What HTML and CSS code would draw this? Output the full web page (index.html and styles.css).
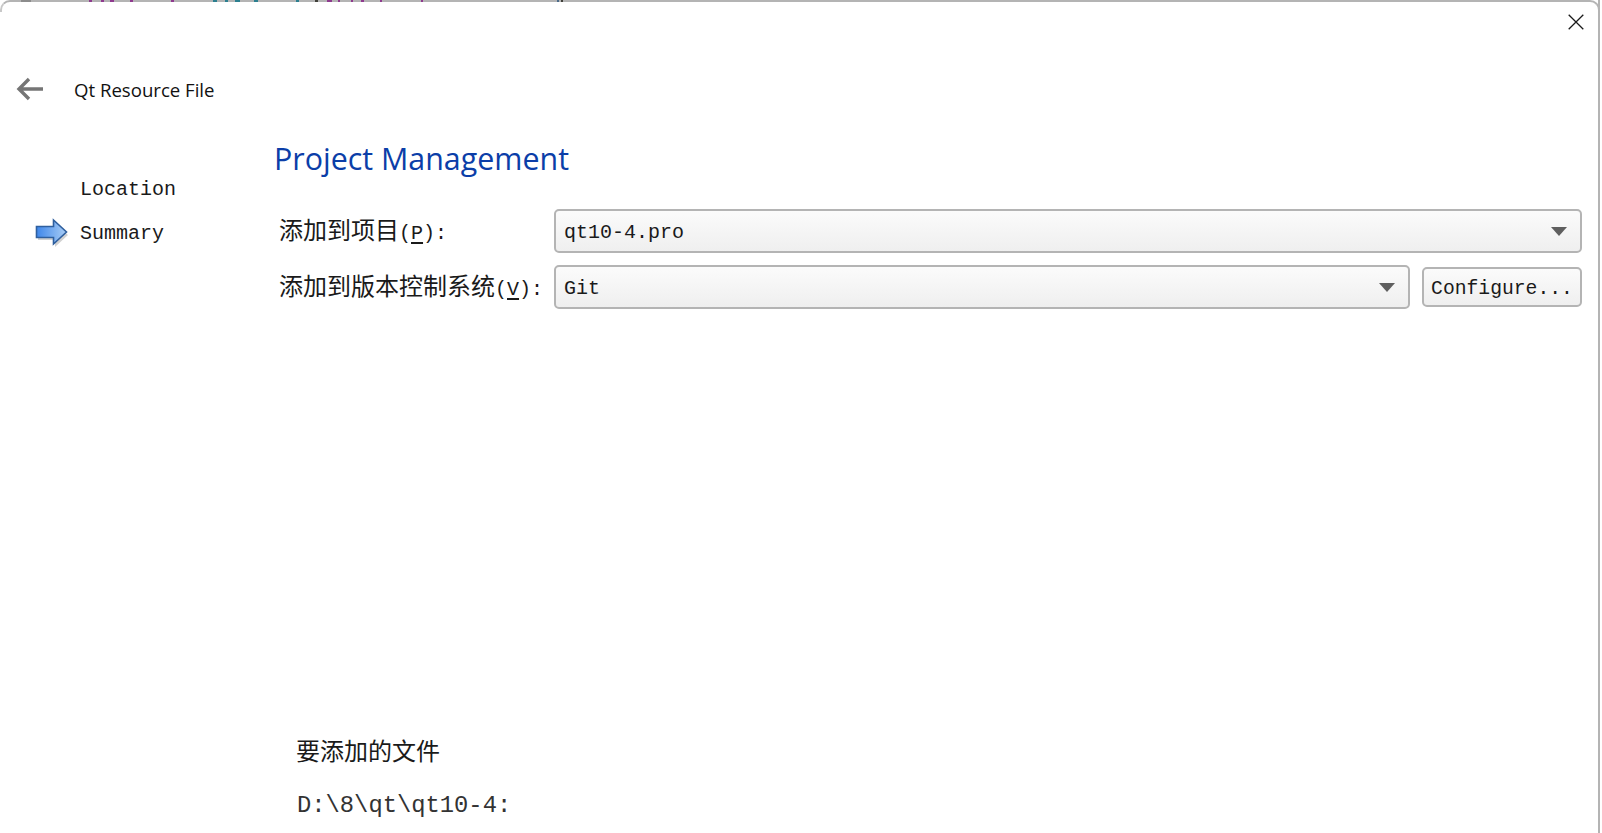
FILE: index.html
```html
<!DOCTYPE html>
<html lang="en">
<head>
    <meta charset="UTF-8">
    <meta name="viewport" content="width=device-width, initial-scale=1.0">
    <title>Project Management</title>
    <link rel="stylesheet" href="styles.css">
</head>
<body>
    <section class="window">
        <div class="titlebar">
            <button class="close" aria-label="Close">
                <svg width="16" height="16" viewBox="0 0 16 16"><path d="M.7.7 15.3 15.3M15.3.7.7 15.3" stroke="#1a1a1a" stroke-width="1.3" fill="none"/></svg>
            </button>
        </div>
        <header class="wizard-head">
            <svg class="back" width="27" height="24" viewBox="0 0 27 24"><path d="M13 2 3 12l10 10M3 12h24" stroke="#757575" stroke-width="3.4" fill="none"/></svg>
            <span class="wizard-name">Qt Resource File</span>
        </header>
        <div class="wizard-body">
            <nav class="steps">
                <div class="step">Location</div>
                <div class="step current">
                    <svg class="step-arrow" width="36" height="32" viewBox="0 0 36 32">
                        <defs>
                            <linearGradient id="arrowFill" x1="0" y1="0" x2="1" y2="0">
                                <stop offset="0" stop-color="#3f87ea"/>
                                <stop offset="1" stop-color="#a9cdf5"/>
                            </linearGradient>
                        </defs>
                        <path d="M2 11h17V4l13 12-13 12v-7H2z" fill="#000" opacity=".18" transform="translate(1 2)"/>
                        <path d="M1.5 9.500h17V3l13 12-13 12v-6.500h-17z" fill="url(#arrowFill)" stroke="#2f5f9e" stroke-width="1.600"/>
                    </svg>
                    Summary
                </div>
            </nav>
            <main class="page">
                <h1 class="page-title">Project Management</h1>
                <div class="form-row first">
                    <label class="form-label">添加到项目<span class="latin">(<u>P</u>):</span></label>
                    <div class="combo"><span>qt10-4.pro</span><i class="caret"></i></div>
                </div>
                <div class="form-row">
                    <label class="form-label">添加到版本控制系统<span class="latin">(<u>V</u>):</span></label>
                    <div class="combo"><span>Git</span><i class="caret"></i></div>
                    <button class="config">Configure...</button>
                </div>
                <div class="files">
                    <p class="files-title">要添加的文件</p>
                    <p class="files-path">D:\8\qt\qt10-4:</p>
                </div>
            </main>
        </div>
    </section>
</body>
</html>
```
FILE: styles.css
```css
*{margin: 0;padding: 0;box-sizing: border-box;}
html,body{height: 100%;background: #fff;overflow: hidden;}
body{
    font-family: "Liberation Mono", "Noto Sans CJK SC", monospace;
    font-size: 20px;
    color: #1a1a1a;
}
.window{
    width: 1600px;
    height: 833px;
    border-right: 2px solid #b4b4b4;
    position: relative;
    background: #fff;
    display: flex;
    flex-direction: column;
}
/* bits of the window behind, showing through the top edge */
.window::before{
    content: "";
    position: absolute;
    left: 10px; right: 8px; top: 0;
    height: 2px;
    background: linear-gradient(90deg,
        #b4b4b4 0 11px, #8c8c8c 11px 21px, #b4b4b4 21px 79px, #8e3a8e 79px 82px, #b4b4b4 82px 91px, #8e3a8e 91px 94px, #b4b4b4 94px 100px, #8e3a8e 100px 104px,
        #b4b4b4 104px 120px, #8e3a8e 120px 123px, #b4b4b4 123px 161px, #8e3a8e 161px 164px, #b4b4b4 164px 203px,
        #2b7f8f 203px 207px, #b4b4b4 207px 215px, #2b7f8f 215px 218px, #b4b4b4 218px 225px, #2b7f8f 225px 230px,
        #b4b4b4 230px 244px, #2b7f8f 244px 248px, #b4b4b4 248px 286px, #2b7f8f 286px 289px, #b4b4b4 289px 305px,
        #40403a 305px 308px, #b4b4b4 308px 317px, #8e3a8e 317px 322px, #b4b4b4 322px 328px, #8e3a8e 328px 330px,
        #b4b4b4 330px 341px, #8e3a8e 341px 343px, #b4b4b4 343px 351px, #8e3a8e 351px 354px, #b4b4b4 354px 370px,
        #8e3a8e 370px 372px, #b4b4b4 372px 411px, #8e3a8e 411px 413px, #b4b4b4 413px 547px, #4a6a8a 547px 549px,
        #b4b4b4 549px 551px, #40403a 551px 553px, #b4b4b4 553px);
}
.titlebar{
    height: 68px;
    display: flex;
    justify-content: flex-end;
    align-items: flex-start;
    padding: 14px 14px 0 0;
}
/* rounded corners of the window */
.titlebar::before,
.titlebar::after{
    content: "";
    position: absolute;
    top: 0;
    width: 10px;height: 10px;
    border-top: 2px solid #b4b4b4;
}
.titlebar::before{
    left: 0;
    border-left: 2px solid #c8c8c8;
    border-top-left-radius: 10px;
}
.titlebar::after{
    right: -2px;
    border-right: 2px solid #b4b4b4;
    border-top-right-radius: 10px;
}
.close{
    width: 16px;height: 16px;
    border: none;background: none;
    display: block;
}
.close svg{display: block;}
.wizard-head{
    height: 42px;
    margin-bottom: 2px;
    display: flex;
    align-items: center;
    padding-left: 16px;
}
.back{margin-right: 31px;}
.wizard-name{
    font-family: "Open Sans", sans-serif;
    font-size: 18.600px;
    color: #111;
}
.wizard-body{
    flex: 1;
    display: flex;
}
.steps{
    width: 274px;
    padding-top: 55px;
}
.step{
    height: 44px;
    padding-left: 80px;
    display: flex;
    align-items: center;
    position: relative;
}
.step-arrow{
    position: absolute;
    left: 35px;
    top: 6px;
}
.page{
    flex: 1;
    padding-right: 16px;
}
.page-title{
    font-family: "Open Sans", sans-serif;
    font-weight: 400;
    font-size: 30.400px;
    line-height: 42px;
    margin-top: 26px;
    color: #0b3ea8;
}
.form-row{
    display: flex;
    align-items: center;
    height: 44px;
    margin-top: 12px;
    padding-left: 5px;
}
.form-row.first{margin-top: 29px;}
.form-label{
    width: 275px;
    flex: none;
    font-size: 24px;
    line-height: 36px;
    padding-top: 4px;
    white-space: nowrap;
}
.latin{font-size: 20px;}
.form-label u{text-underline-offset: 3px;}
.combo{
    flex: 1;
    height: 44px;
    border: 2px solid #b4b4b4;
    border-radius: 5px;
    background: linear-gradient(#fbfbfb, #efefef);
    display: flex;
    align-items: center;
    justify-content: space-between;
    padding: 3px 13px 0 8px;
}
.caret{
    width: 0;height: 0;
    border-left: 8px solid transparent;
    border-right: 8px solid transparent;
    border-top: 9px solid #5f5f5f;
    margin-top: -3px;
}
.config{
    width: 160px;
    height: 40px;
    margin-left: 12px;
    padding: 4px 0 0 0;
    border: 2px solid #b4b4b4;
    border-radius: 5px;
    background: linear-gradient(#fbfbfb, #efefef);
    font: inherit;
    font-size: 19.700px;
    color: inherit;
}
.files{
    margin-top: 427px;
    padding-left: 22px;
}
.files-title{
    font-size: 24px;
    line-height: 36px;
}
.files-path{
    font-size: 23.800px;
    line-height: 36px;
    margin-top: 16px;
    margin-left: 1px;
    color: #333;
}
```
